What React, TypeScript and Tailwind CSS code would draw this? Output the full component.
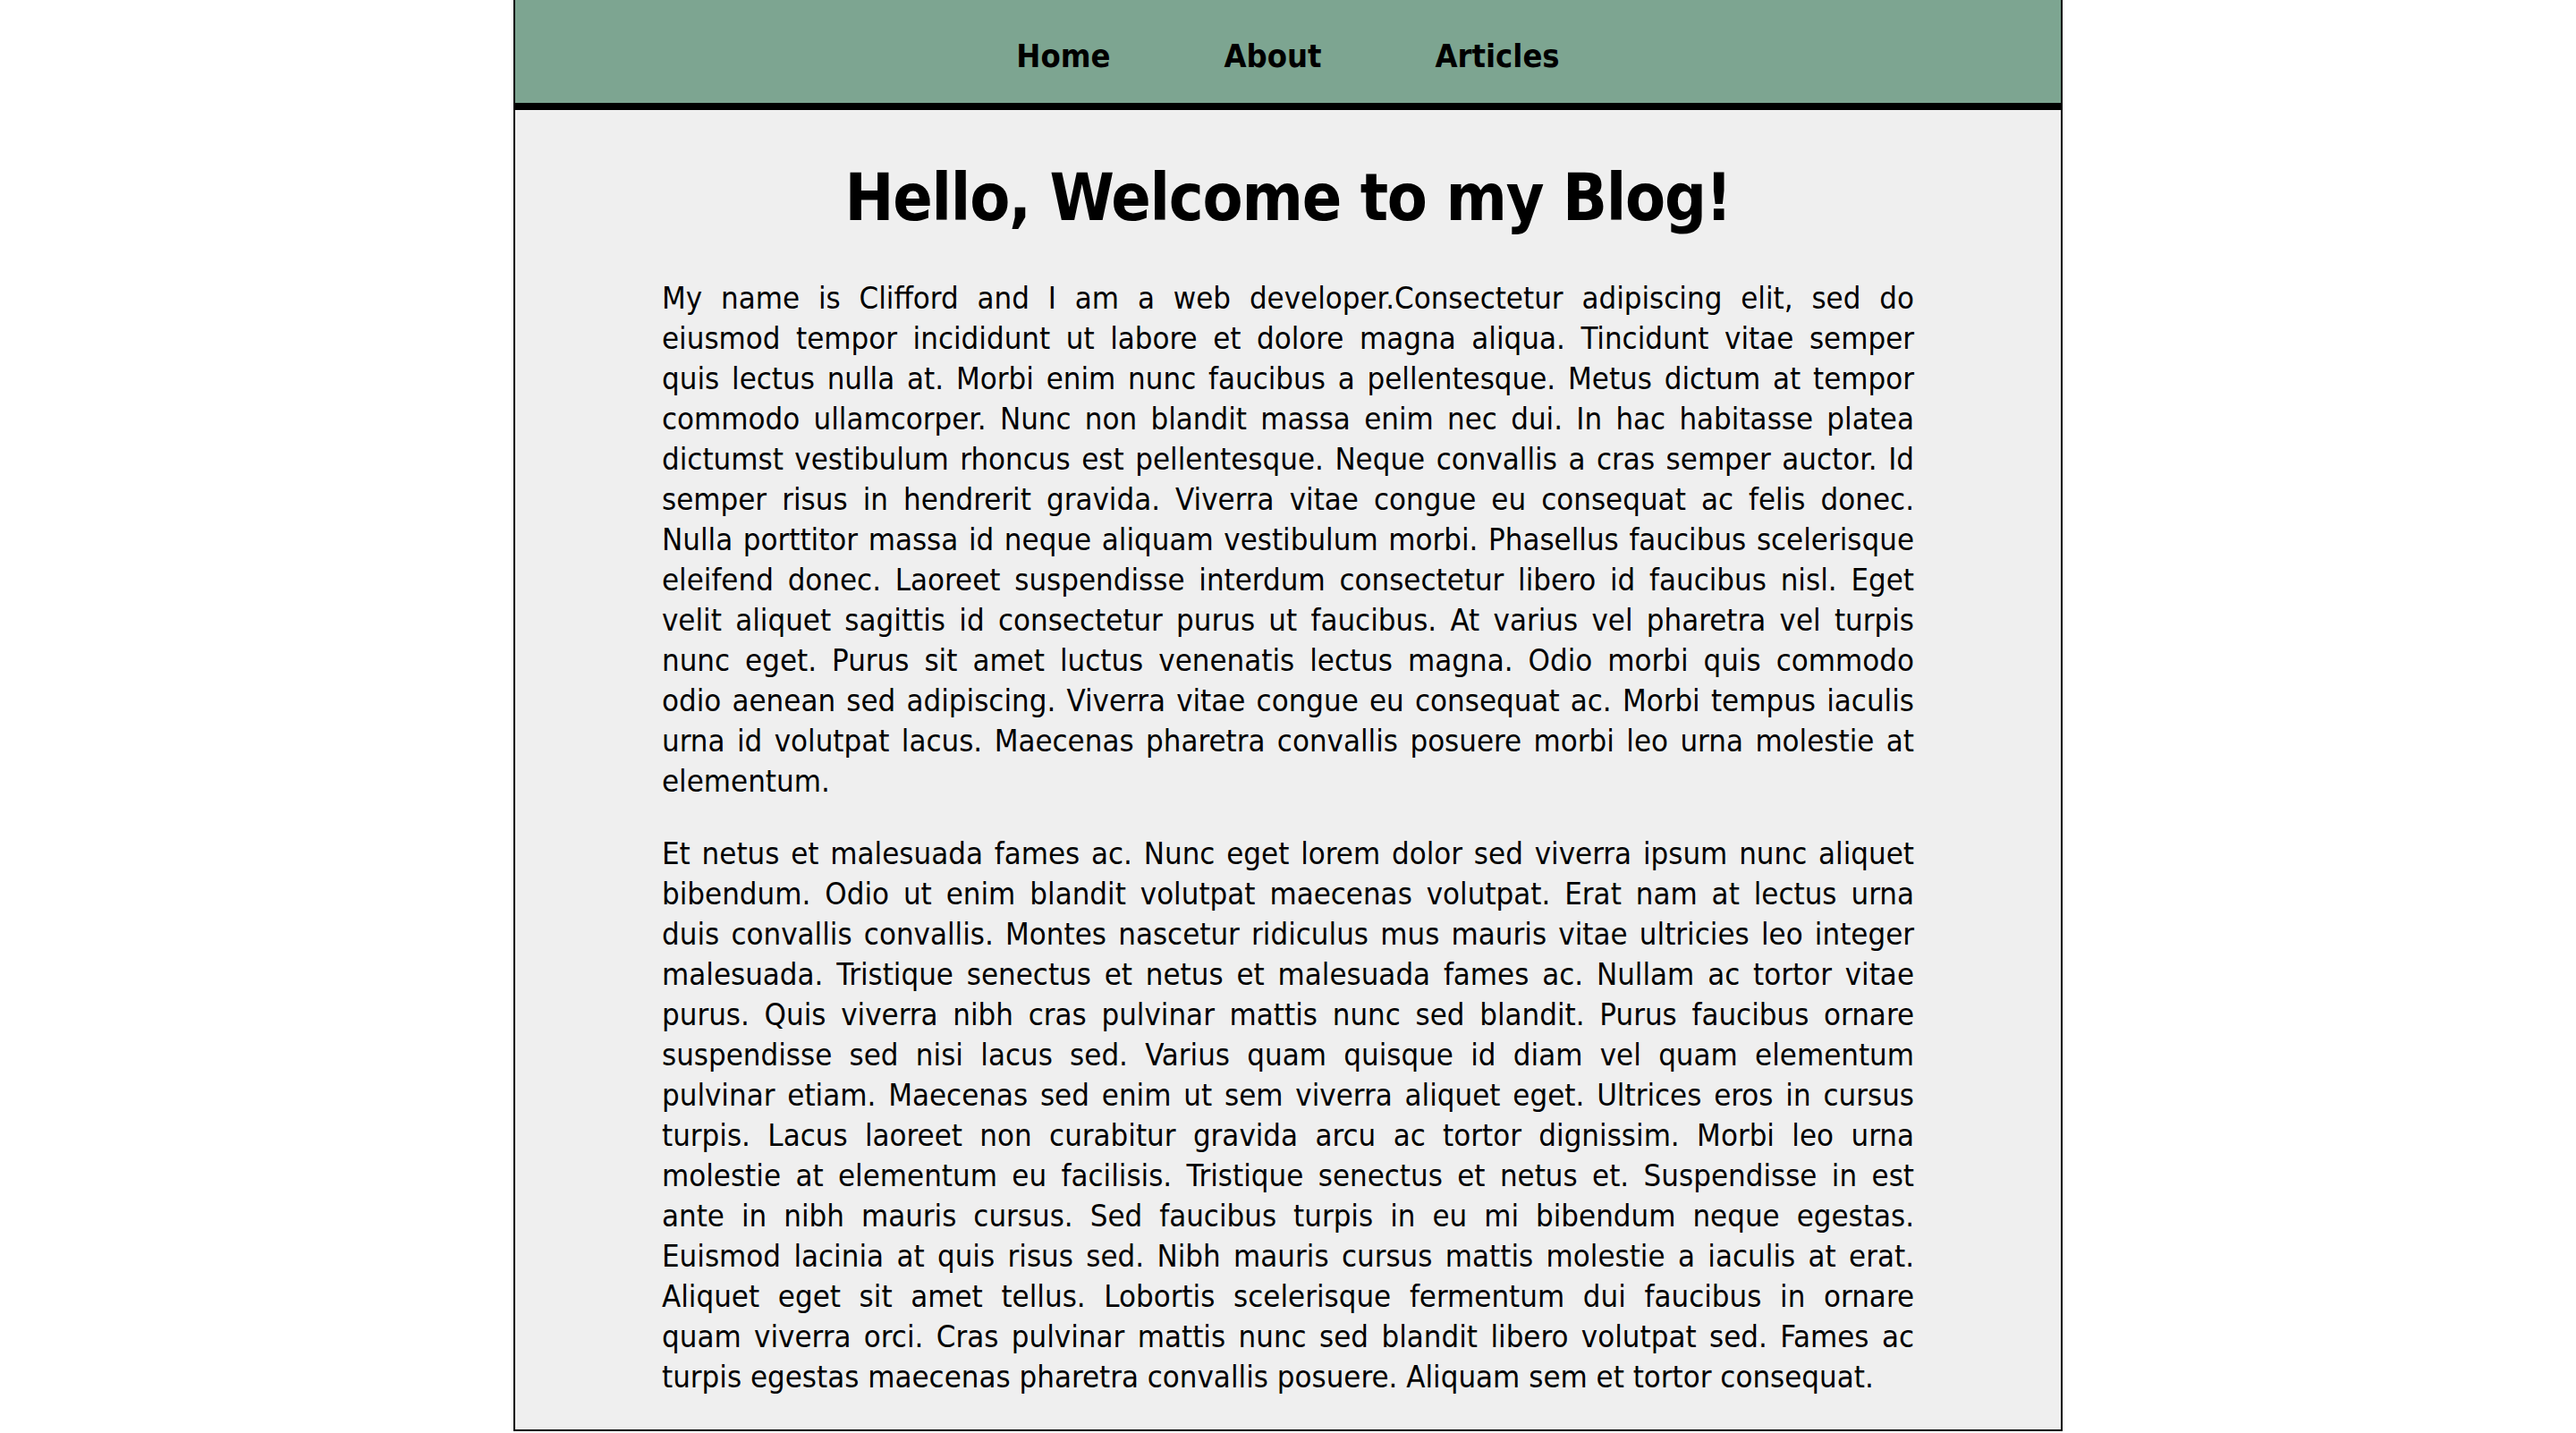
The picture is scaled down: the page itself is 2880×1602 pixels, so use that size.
const font = { fontFamily: '"DejaVu Sans Condensed", "DejaVu Sans", Verdana, sans-serif' }

// lines kept as in the reference so the justified wrap matches
const paragraphs = [
  [
    "My name is Clifford and I am a web developer.Consectetur adipiscing elit, sed do",
    "eiusmod tempor incididunt ut labore et dolore magna aliqua. Tincidunt vitae semper",
    "quis lectus nulla at. Morbi enim nunc faucibus a pellentesque. Metus dictum at tempor",
    "commodo ullamcorper. Nunc non blandit massa enim nec dui. In hac habitasse platea",
    "dictumst vestibulum rhoncus est pellentesque. Neque convallis a cras semper auctor. Id",
    "semper risus in hendrerit gravida. Viverra vitae congue eu consequat ac felis donec.",
    "Nulla porttitor massa id neque aliquam vestibulum morbi. Phasellus faucibus scelerisque",
    "eleifend donec. Laoreet suspendisse interdum consectetur libero id faucibus nisl. Eget",
    "velit aliquet sagittis id consectetur purus ut faucibus. At varius vel pharetra vel turpis",
    "nunc eget. Purus sit amet luctus venenatis lectus magna. Odio morbi quis commodo",
    "odio aenean sed adipiscing. Viverra vitae congue eu consequat ac. Morbi tempus iaculis",
    "urna id volutpat lacus. Maecenas pharetra convallis posuere morbi leo urna molestie at",
    "elementum.",
  ],
  [
    "Et netus et malesuada fames ac. Nunc eget lorem dolor sed viverra ipsum nunc aliquet",
    "bibendum. Odio ut enim blandit volutpat maecenas volutpat. Erat nam at lectus urna",
    "duis convallis convallis. Montes nascetur ridiculus mus mauris vitae ultricies leo integer",
    "malesuada. Tristique senectus et netus et malesuada fames ac. Nullam ac tortor vitae",
    "purus. Quis viverra nibh cras pulvinar mattis nunc sed blandit. Purus faucibus ornare",
    "suspendisse sed nisi lacus sed. Varius quam quisque id diam vel quam elementum",
    "pulvinar etiam. Maecenas sed enim ut sem viverra aliquet eget. Ultrices eros in cursus",
    "turpis. Lacus laoreet non curabitur gravida arcu ac tortor dignissim. Morbi leo urna",
    "molestie at elementum eu facilisis. Tristique senectus et netus et. Suspendisse in est",
    "ante in nibh mauris cursus. Sed faucibus turpis in eu mi bibendum neque egestas.",
    "Euismod lacinia at quis risus sed. Nibh mauris cursus mattis molestie a iaculis at erat.",
    "Aliquet eget sit amet tellus. Lobortis scelerisque fermentum dui faucibus in ornare",
    "quam viverra orci. Cras pulvinar mattis nunc sed blandit libero volutpat sed. Fames ac",
    "turpis egestas maecenas pharetra convallis posuere. Aliquam sem et tortor consequat.",
  ],
]

export default function App() {
  return (
    <div className="min-h-screen bg-white text-black" style={font}>
      <div className="mx-auto w-[1732px] border-x-2 border-b-2 border-black bg-[#efefef] pb-[36px]">
        <nav className="flex h-[123px] items-center justify-center gap-[127px] border-b-[8px] border-black bg-[#7da591] pt-[10px] text-[36px] font-bold leading-none">
          <a href="#">Home</a>
          <a href="#">About</a>
          <a href="#">Articles</a>
        </nav>

        <h1 className="mt-[61px] text-center text-[73px] font-bold leading-none tracking-[-1.2px]">
          Hello, Welcome to my Blog!
        </h1>

        <div className="mx-auto mt-[54px] flex w-[1400px] flex-col gap-[36px]">
          {paragraphs.map((lines, i) => (
            <p key={i} className="text-[34.5px] leading-[45px]">
              {lines.map((line, j) => (
                <span
                  key={j}
                  className={
                    j < lines.length - 1
                      ? "block text-justify [text-align-last:justify]"
                      : "block text-left"
                  }
                >
                  {line}{" "}
                </span>
              ))}
            </p>
          ))}
        </div>
      </div>
    </div>
  )
}
